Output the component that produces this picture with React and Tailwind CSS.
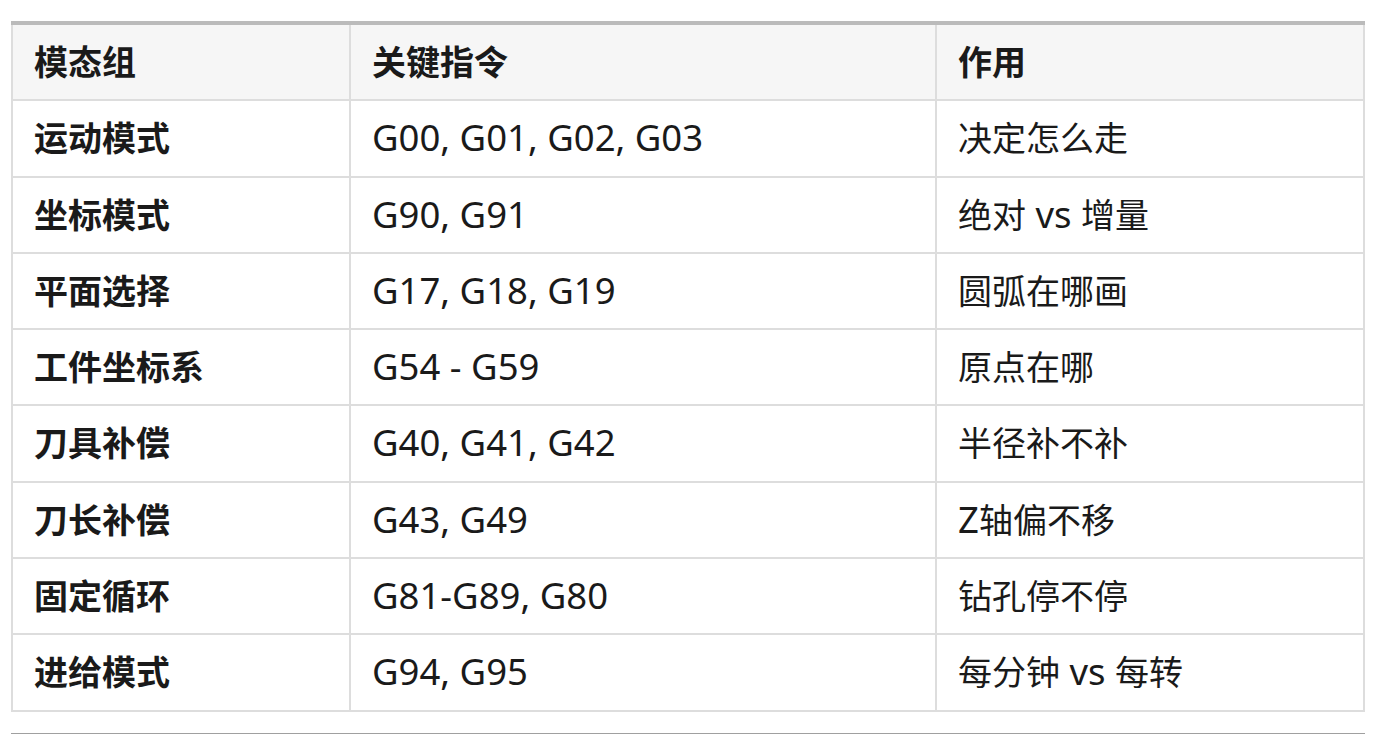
import React from "react";

// ===== Table Data =====
const rows = [
  { group: "运动模式", codes: "G00, G01, G02, G03", use: "决定怎么走" },
  { group: "坐标模式", codes: "G90, G91", use: "绝对 vs 增量" },
  { group: "平面选择", codes: "G17, G18, G19", use: "圆弧在哪画" },
  { group: "工件坐标系", codes: "G54 - G59", use: "原点在哪" },
  { group: "刀具补偿", codes: "G40, G41, G42", use: "半径补不补" },
  { group: "刀长补偿", codes: "G43, G49", use: "Z轴偏不移" },
  { group: "固定循环", codes: "G81-G89, G80", use: "钻孔停不停" },
  { group: "进给模式", codes: "G94, G95", use: "每分钟 vs 每转" },
];

const font = { fontFamily: '"Noto Sans", "Noto Sans CJK SC", sans-serif' };

// Latin runs render a bit larger than the CJK ones in the reference
function Mixed({ text }) {
  const parts = text.split(/([\u4e00-\u9fff]+)/).filter(Boolean);
  return parts.map((p, i) =>
    /[\u4e00-\u9fff]/.test(p) ? (
      <span key={i}>{p}</span>
    ) : (
      <span key={i} className="text-[36.5px] leading-none">{p}</span>
    )
  );
}

const cell = "border-2 border-[#dddddd] px-[21px] py-[11px] text-left";

export default function App() {
  return (
    <div className="min-h-screen bg-white px-[11px] pt-[21px] text-[#1a1a1a]" style={font}>
      <table className="w-[1354px] border-collapse border-t-4 border-t-[#bbbbbb] text-[34px] leading-[52.3px]">
        <thead>
          <tr className="bg-[#f6f6f6]">
            <th className={`w-[338px] border-t-0 font-bold ${cell}`}>模态组</th>
            <th className={`w-[586px] border-t-0 font-bold ${cell}`}>关键指令</th>
            <th className={`border-t-0 font-bold ${cell}`}>作用</th>
          </tr>
        </thead>
        <tbody>
          {rows.map((r) => (
            <tr key={r.group}>
              <td className={`font-bold ${cell}`}>{r.group}</td>
              <td className={cell}><Mixed text={r.codes} /></td>
              <td className={cell}><Mixed text={r.use} /></td>
            </tr>
          ))}
        </tbody>
      </table>
      <div className="mt-[21px] h-[3px] w-[1354px] bg-[#a0a0a0]" />
    </div>
  );
}
